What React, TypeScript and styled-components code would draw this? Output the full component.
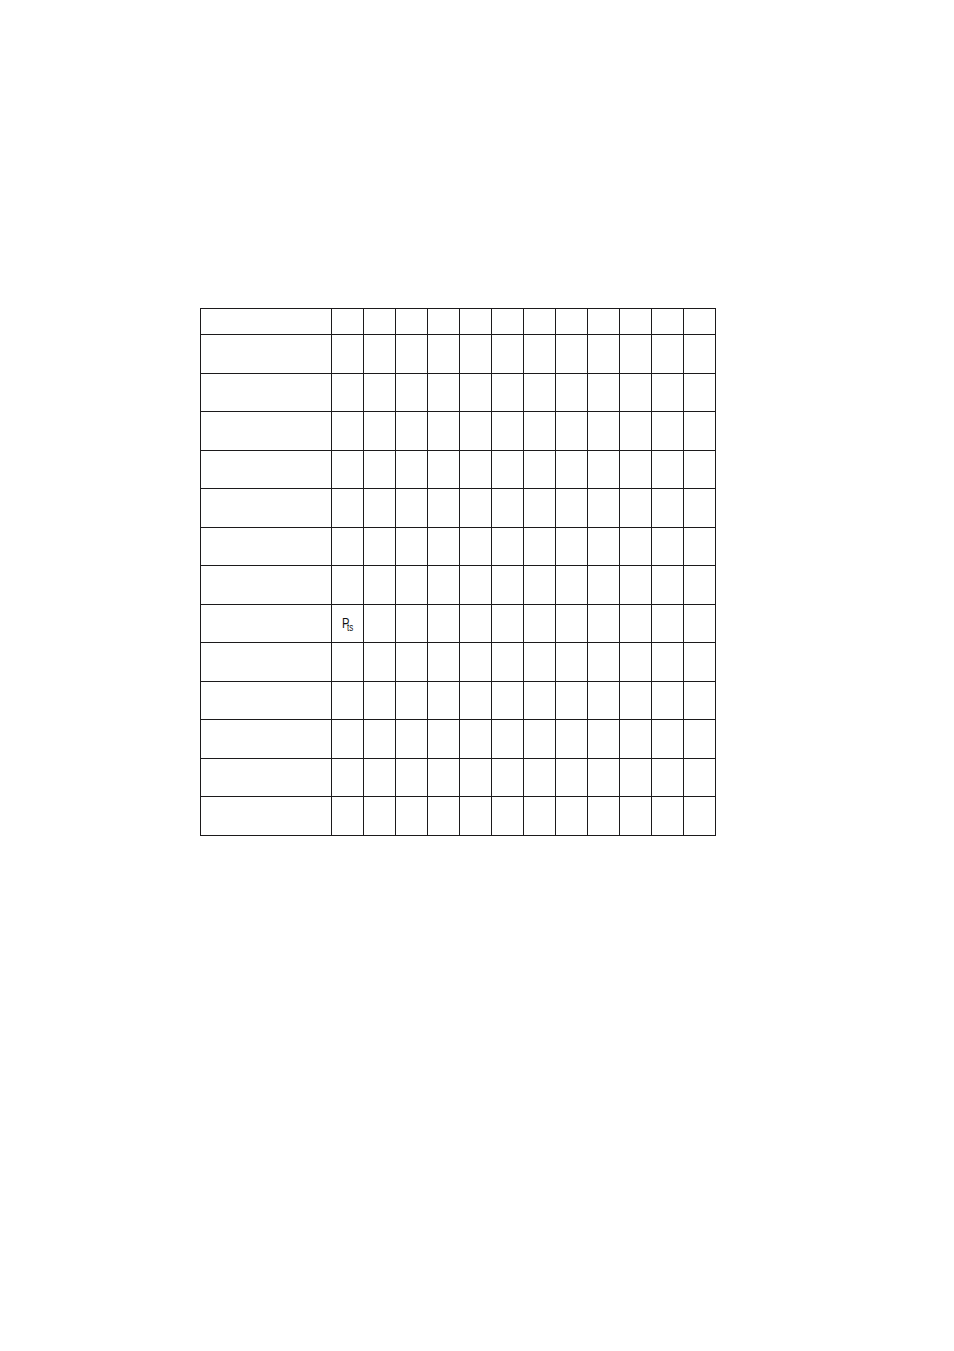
import styled, { createGlobalStyle } from "styled-components";

const GlobalStyle = createGlobalStyle`
  html, body {
    margin: 0;
    padding: 0;
    background: #ffffff;
  }
  body {
    font-family: "Liberation Sans", Arial, sans-serif;
    color: #231f20;
  }
`;

const Page = styled.div`
  width: 954px;
  min-height: 1351px;
  box-sizing: border-box;
  padding: 308px 0 0 200px;
`;

const Grid = styled.table`
  border-collapse: collapse;
  table-layout: fixed;
  width: 515px;
`;

const Col = styled.col<{ $wide?: boolean }>`
  width: ${(p) => (p.$wide ? "131px" : "32px")};
`;

const Row = styled.tr<{ $head?: boolean }>`
  height: ${(p) => (p.$head ? "26px" : "38.5px")};
`;

const Cell = styled.td`
  border: 1px solid #1c1a1b;
  padding: 0;
  font-size: 14px;
  line-height: 1;
  vertical-align: middle;
`;

const Symbol = styled.span`
  display: inline-block;
  margin: 2px 0 0 10px;
  color: #111;
  transform: scaleX(0.8);
  transform-origin: left center;
  sub {
    font-size: 10px;
    margin-left: -3px;
    vertical-align: -3px;
  }
`;

const COLS = 12;
const ROWS = 13;

export default function App() {
  return (
    <>
      <GlobalStyle />
      <Page>
        <Grid>
          <colgroup>
            <Col $wide />
            {Array.from({ length: COLS }, (_, c) => (
              <Col key={c} />
            ))}
          </colgroup>
          <tbody>
            <Row $head>
              <Cell />
              {Array.from({ length: COLS }, (_, c) => (
                <Cell key={c} />
              ))}
            </Row>
            {Array.from({ length: ROWS }, (_, r) => (
              <Row key={r}>
                <Cell />
                {Array.from({ length: COLS }, (_, c) => (
                  <Cell key={c}>
                    {r === 7 && c === 0 ? (
                      <Symbol>
                        P<sub>ts</sub>
                      </Symbol>
                    ) : null}
                  </Cell>
                ))}
              </Row>
            ))}
          </tbody>
        </Grid>
      </Page>
    </>
  );
}
